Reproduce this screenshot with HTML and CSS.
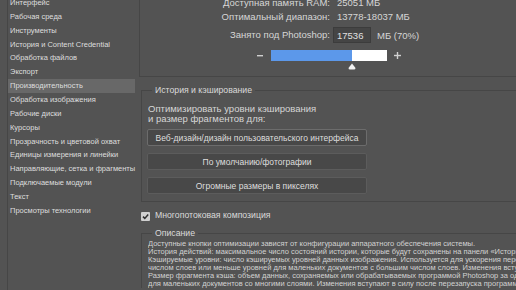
FILE: index.html
```html
<!DOCTYPE html>
<html lang="ru">
<head>
    <meta charset="UTF-8">
    <meta name="viewport" content="width=device-width, initial-scale=1.0">
    <link rel="stylesheet" href="styles.css">
</head>
<body>
    <div class="prefs">
        <nav class="sidebar">
            <ul class="nav-list">
                <li>Интерфейс</li>
                <li>Рабочая среда</li>
                <li>Инструменты</li>
                <li>История и Content Credential</li>
                <li>Обработка файлов</li>
                <li>Экспорт</li>
                <li class="active">Производительность</li>
                <li>Обработка изображения</li>
                <li>Рабочие диски</li>
                <li>Курсоры</li>
                <li>Прозрачность и цветовой охват</li>
                <li>Единицы измерения и линейки</li>
                <li>Направляющие, сетка и фрагменты</li>
                <li>Подключаемые модули</li>
                <li>Текст</li>
                <li>Просмотры технологии</li>
            </ul>
        </nav>

        <main class="content">
            <section class="memory">
                <div class="mem-grid">
                    <span class="mem-label">Доступная память RAM:</span>
                    <span class="mem-value">25051 МБ</span>
                    <span class="mem-label">Оптимальный диапазон:</span>
                    <span class="mem-value">13778-18037 МБ</span>
                    <span class="mem-label mem-last">Занято под Photoshop:</span>
                    <span class="mem-edit mem-last">
                        <input class="mem-input" type="text" value="17536">
                        <span class="mem-unit">МБ (70%)</span>
                    </span>
                </div>
                <div class="slider">
                    <svg class="slider-btn" width="7" height="7" viewBox="0 0 7 7"><rect x="0" y="3" width="6" height="1.4" fill="#d0d0d0"/></svg>
                    <div class="slider-track">
                        <div class="slider-fill" style="width: 70%"></div>
                        <svg class="slider-thumb" style="left: 70%" width="8" height="7" viewBox="0 0 8 7"><path d="M4 0.5 L7.5 5 Q7.5 6.5 6 6.5 L2 6.5 Q0.5 6.5 0.5 5 Z" fill="#f2f2f2"/></svg>
                    </div>
                    <svg class="slider-btn" width="7" height="7" viewBox="0 0 7 7"><rect x="0" y="2.8" width="7" height="1.4" fill="#d0d0d0"/><rect x="2.8" y="0" width="1.4" height="7" fill="#d0d0d0"/></svg>
                </div>
            </section>

            <fieldset class="group">
                <legend class="group-title">История и кэширование</legend>
                <p class="group-text">Оптимизировать уровни кэширования<br>и размер фрагментов для:</p>
                <div class="preset-list">
                    <button class="preset preset-focus">Веб-дизайн/дизайн пользовательского интерфейса</button>
                    <button class="preset">По умолчанию/фотографии</button>
                    <button class="preset">Огромные размеры в пикселях</button>
                </div>
            </fieldset>

            <label class="check-row">
                <span class="check-box">
                    <svg width="9" height="9" viewBox="0 0 9 9"><path d="M2 4.6 L3.8 6.4 L7.2 2.6" fill="none" stroke="#2e2e2e" stroke-width="1.5"/></svg>
                </span>
                Многопотоковая композиция
            </label>

            <fieldset class="group group-desc">
                <legend class="group-title">Описание</legend>
                <div class="desc">
                    <p>Доступные кнопки оптимизации зависят от конфигурации аппаратного обеспечения системы.</p>
                    <p>История действий: максимальное число состояний истории, которые будут сохранены на панели «История».</p>
                    <p>Кэшируемые уровни: число кэшируемых уровней данных изображения. Используется для ускорения перерисовки изображения. Выберите больше уровней для больших документов с небольшим</p>
                    <p>числом слоев или меньше уровней для маленьких документов с большим числом слоев. Изменения вступают в силу после перезапуска программы Photoshop.</p>
                    <p>Размер фрагмента кэша: объем данных, сохраняемых или обрабатываемых программой Photoshop за один раз. Выберите фрагменты большего размера для больших документов</p>
                    <p>для маленьких документов со многими слоями. Изменения вступают в силу после перезапуска программы Photoshop.</p>
                </div>
            </fieldset>
        </main>
    </div>
</body>
</html>
```

FILE: styles.css
```css
body {
   margin: 0;
   background: #535353;
   color: #d6d6d6;
   font-family: "Liberation Sans", Arial, sans-serif;
   font-size: 9.5px;
   overflow: hidden;
   height: 290px;
}
.prefs {
   display: flex;
   height: 290px;
}

/* left list of sections */
.sidebar {
   width: 127px;
   margin-left: 7px;
   border-left: 1px solid #464646;
   flex-shrink: 0;
   display: flow-root;
}
.nav-list {
   list-style: none;
   margin: -4px 0 0 0;
   padding: 0;
}
.nav-list li {
   height: 13.87px;
   line-height: 13.87px;
   padding-left: 2px;
   font-size: 7.5px;
   color: #dedede;
   white-space: nowrap;
}
.nav-list li.active {
   background: #686868;
}

/* right side */
.content {
   flex: 1;
   margin-left: 4px;
   min-width: 0;
}
.memory {
   display: flow-root;
   height: 76px;
   border-left: 1px solid #464646;
   border-bottom: 1px solid #464646;
}
.mem-grid {
   display: grid;
   grid-template-columns: 190px auto;
   grid-template-rows: 14px 14px 20px;
   column-gap: 3px;
   margin-top: -5px;
   align-items: center;
}
.mem-label {
   text-align: right;
   white-space: nowrap;
}
.mem-value {
   padding-left: 4px;
   white-space: nowrap;
}
.mem-last {
   align-self: end;
}
.mem-label.mem-last {
   line-height: 16px;
}
.mem-edit {
   display: flex;
   align-items: center;
   gap: 6px;
}
.mem-input {
   width: 38px;
   height: 16px;
   box-sizing: border-box;
   margin: 0;
   padding: 0 3px;
   border: 1px solid #3c3c3c;
   background: #454545;
   color: #e0e0e0;
   font: inherit;
}

.slider {
   display: flex;
   align-items: center;
   gap: 7px;
   margin: 7px 0 0 117px;
}
.slider-btn {
   display: block;
}
.slider-track {
   position: relative;
   width: 116px;
   height: 11px;
   background: #ffffff;
}
.slider-fill {
   height: 100%;
   background: #5c98ea;
}
.slider-thumb {
   position: absolute;
   top: 13px;
   margin-left: -4px;
}

/* grouped boxes */
.group {
   margin: 7px 0 0 2px;
   padding: 8px 0 7px 6px;
   border: 1px solid #464646;
   width: 420px;
   min-width: 0;
}
.group-title {
   margin-left: 4px;
   padding: 0 3px;
   line-height: 12px;
   font-size: 8.7px;
   color: #dadada;
}
.group-text {
   margin: 0;
   line-height: 10px;
}
.preset-list {
   display: flex;
   flex-direction: column;
   gap: 7px;
   margin: 5px 0 0 -1px;
}
.preset {
   width: 220px;
   height: 17px;
   padding: 0;
   border: 1px solid #5c5c5c;
   border-radius: 2px;
   background: #484848;
   color: #dedede;
   font: inherit;
   font-size: 8.5px;
   white-space: nowrap;
}
.preset-focus {
   border-color: #6c6c6c;
}

.check-row {
   display: flex;
   align-items: center;
   gap: 5px;
   margin: 7px 0 0 2px;
   height: 12px;
   font-size: 8.7px;
   color: #dadada;
}
.check-box {
   width: 9px;
   height: 9px;
   margin-top: 3px;
   border-radius: 1px;
   background: #cfcfcf;
}
.check-box svg {
   display: block;
}

.group-desc {
   margin-top: 6px;
   padding: 1px 0 0 6px;
   width: 600px;
   border-bottom: none;
}
.desc {
   overflow: hidden;
}
.desc p {
   margin: 0;
   font-size: 7.5px;
   line-height: 8px;
   white-space: nowrap;
   color: #d2d2d2;
}
```
